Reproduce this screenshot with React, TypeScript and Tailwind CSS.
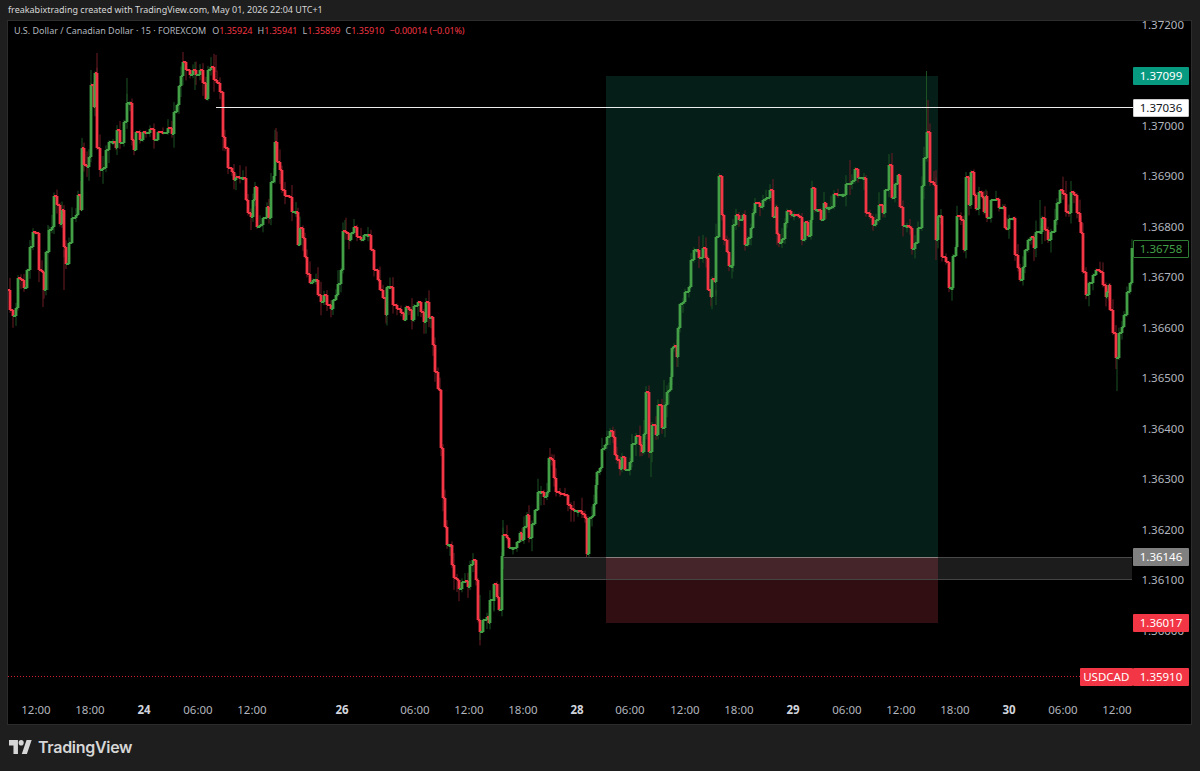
const P: number[] = [
8,290,10,310,13,316,16,308,18,278,21,280,24,288,27,270,30,247,33,232,36,233,39,270,42,272,44,290,46,252,49,230,52,227,54,196,57,205,60,224,62,210,64,247,66,264,69,243,72,218,76,215,78,195,81,210,82,148,84,165,87,167,89,157,91,85,94,107,95,73,97,148,100,170,103,168,106,150,109,142,113,142,116,148,117,130,120,143,124,122,127,103,130,103,132,140,134,150,136,132,140,140,143,132,146,133,150,129,154,140,158,132,163,133,168,128,172,134,174,112,177,105,179,86,181,76,183,62,186,70,190,75,193,70,196,75,200,70,203,83,206,99,208,70,211,67,214,80,217,83,220,92,223,137,225,148,228,168,232,172,234,180,236,177,240,178,243,178,246,200,248,213,251,217,253,200,255,187,257,227,260,225,263,218,267,207,269,218,271,182,274,176,275,142,277,162,280,170,282,190,285,196,290,197,292,212,296,212,298,245,300,228,303,238,305,257,307,274,310,283,313,280,316,280,318,295,321,302,324,295,327,305,331,309,333,300,336,295,338,284,341,270,343,231,346,233,349,240,351,233,354,227,357,237,361,240,364,235,368,235,371,250,374,270,378,280,380,290,383,298,386,315,387,287,390,287,393,305,397,309,401,313,404,320,406,307,409,310,412,320,414,306,418,302,421,312,424,322,426,302,429,318,431,317,433,345,435,372,438,389,440,390,441,448,443,498,445,527,447,545,450,545,452,565,454,578,457,580,459,589,462,582,465,581,468,587,470,565,473,560,476,580,478,620,480,632,483,620,487,617,489,623,490,600,494,599,494,584,497,597,499,610,502,556,503,535,507,538,509,548,513,548,517,542,520,533,522,540,524,527,527,515,529,538,532,524,535,510,538,492,541,492,544,497,547,492,549,458,552,460,554,478,556,492,560,494,565,495,568,505,571,509,574,511,578,511,582,514,585,518,587,554,589,518,592,516,594,504,596,485,597,472,600,468,602,449,605,445,607,437,610,431,613,437,615,455,617,460,620,469,622,457,625,470,630,462,632,444,636,436,640,445,642,452,644,434,646,392,649,452,652,425,656,435,658,405,662,428,665,405,667,392,669,390,671,377,672,348,674,346,677,357,678,328,680,304,683,302,685,292,689,287,691,260,694,250,697,250,699,258,703,248,706,258,708,290,711,297,712,279,715,282,716,237,719,176,722,215,724,240,727,252,729,266,732,266,733,225,736,215,739,220,743,215,745,245,748,238,751,228,753,213,755,203,760,207,763,200,766,198,770,190,773,217,776,207,777,234,779,243,782,239,785,223,787,211,791,215,794,215,799,217,802,240,805,222,808,236,811,220,812,188,815,210,818,210,821,220,824,203,826,208,829,208,831,207,834,194,838,195,843,195,846,184,852,181,855,169,858,178,864,178,866,213,870,217,873,225,876,220,879,205,883,213,885,190,889,165,892,198,895,184,898,175,900,207,903,226,907,226,910,228,912,249,915,243,918,228,922,186,924,158,927,132,930,182,934,185,936,240,938,216,941,216,942,257,946,262,949,288,952,288,953,256,956,247,957,216,961,220,964,250,966,177,969,205,971,172,974,195,976,209,979,192,982,197,984,212,986,196,987,218,991,200,996,199,999,208,1003,207,1005,228,1007,229,1009,219,1013,218,1015,255,1018,268,1020,280,1023,267,1025,250,1028,240,1031,237,1034,248,1036,232,1041,232,1042,218,1045,230,1048,240,1051,232,1055,220,1057,203,1060,190,1063,194,1066,212,1069,213,1071,192,1074,195,1077,213,1080,222,1081,233,1083,272,1086,295,1089,283,1093,275,1096,270,1100,272,1103,285,1106,297,1107,292,1109,285,1110,310,1113,333,1116,358,1119,333,1122,327,1124,315,1127,292,1130,283,1132,248,
];

const GREEN = "#43a047";
const RED = "#f23645";
const DIM_G = "#1c5222";
const DIM_R = "#6f1c25";

const EXTRA: [number, number, number, "g" | "r"][] = [
  [926.5, 71, 132, "g"], [928, 100, 135, "r"], [97, 53, 75, "r"], [91, 70, 90, "g"], [127, 78, 103, "g"],
  [183, 52, 62, "r"], [216, 55, 72, "r"], [586.5, 554, 565, "r"], [651, 452, 477, "g"], [1117, 358, 391, "g"],
  [64, 250, 290, "r"], [43, 290, 307, "r"], [276, 128, 150, "r"], [550, 448, 462, "r"], [345, 220, 232, "g"],
  [936, 170, 260, "r"], [503, 520, 556, "g"], [1040, 200, 232, "g"],
  [850, 160, 195, "r"], [644, 420, 436, "g"], [664, 380, 405, "g"], [716, 290, 305, "g"], [48, 225, 290, "g"],
  [195, 62, 90, "g"], [480, 595, 640, "g"],
];

function wickFor(i: number) {
  const a = Math.abs(Math.sin(i * 12.9898) * 43758.5453) % 1;
  const b = Math.abs(Math.sin(i * 78.233) * 12543.231) % 1;
  return [a * a * 13 + 1, b * b * 13 + 1];
}

function Candles() {
  const items: React.ReactNode[] = [];
  for (let n = 2; n < P.length; n += 2) {
    const i = n / 2;
    const py = P[n - 1];
    const x = P[n];
    const y = P[n + 1];
    const up = y <= py;
    const top = Math.min(py, y);
    const bot = Math.max(py, y);
    const [w1, w2] = wickFor(i);
    items.push(
      <rect key={"w" + i} x={x - 0.5} y={top - w1} width={1} height={bot - top + w1 + w2} fill={up ? DIM_G : DIM_R} />
    );
  }
  EXTRA.forEach(([x, a, b, c], i) => {
    items.push(<rect key={"e" + i} x={x - 0.5} y={Math.min(a, b)} width={1} height={Math.abs(b - a)} fill={c === "g" ? DIM_G : DIM_R} />);
  });
  for (let n = 2; n < P.length; n += 2) {
    const i = n / 2;
    const px = P[n - 2];
    const py = P[n - 1];
    const x = P[n];
    const y = P[n + 1];
    const up = y <= py;
    const c = up ? GREEN : RED;
    const top = Math.min(py, y);
    const h = Math.max(2, Math.abs(y - py));
    items.push(
      <g key={"b" + i} fill={c}>
        <rect x={px} y={py - 1} width={x - px} height={2} />
        <rect x={x - 1.4} y={top} width={2.8} height={h} />
      </g>
    );
  }
  return <g>{items}</g>;
}

const yOf = (p: number) => 125.5 + (1.37 - p) * 50500;
const TICKS = [1.372, 1.37, 1.369, 1.368, 1.367, 1.366, 1.365, 1.364, 1.363, 1.362, 1.361, 1.36];

const TIMES: [string, number, boolean][] = [
  ["12:00", 36, false], ["18:00", 90, false], ["24", 144, true], ["06:00", 198, false], ["12:00", 252, false],
  ["26", 342, true], ["06:00", 415, false], ["12:00", 469, false], ["18:00", 523, false], ["28", 577, true],
  ["06:00", 630, false], ["12:00", 685, false], ["18:00", 739, false], ["29", 793, true], ["06:00", 847, false],
  ["12:00", 901, false], ["18:00", 955, false], ["30", 1009, true], ["06:00", 1063, false], ["12:00", 1117, false],
];

const LABELS: { t: string; y: number; cls: string }[] = [
  { t: "1.37099", y: 76, cls: "bg-[#089981] text-white" },
  { t: "1.37036", y: 107.5, cls: "bg-white text-[#131722] border border-[#cccccc]" },
  { t: "1.36758", y: 249, cls: "bg-black text-[#43a047] border border-[#2f7d32]" },
  { t: "1.36146", y: 557, cls: "bg-[#808080] text-white" },
  { t: "1.36017", y: 622.5, cls: "bg-[#f23645] text-white" },
  { t: "1.35910", y: 676.5, cls: "bg-[#f23645] text-white" },
];

function Legend() {
  const V = ({ children }: { children: React.ReactNode }) => <span className="text-[#f23645]">{children}</span>;
  return (
    <div className="absolute left-[6px] top-[3px] flex gap-[5px] whitespace-nowrap text-[9px] leading-[14px] text-[#b2b5be]">
      <span className="mr-[1px]">U.S. Dollar / Canadian Dollar · 15 · FOREXCOM</span>
      <span>O<V>1.35924</V></span>
      <span>H<V>1.35941</V></span>
      <span>L<V>1.35899</V></span>
      <span>C<V>1.35910</V></span>
      <span className="tracking-[-0.1px]"><V>−0.00014 (−0.01%)</V></span>
    </div>
  );
}

export default function App() {
  return (
    <div className="flex h-[771px] w-[1200px] flex-col overflow-hidden bg-[#1e1e1e] font-['Noto_Sans',sans-serif]">
      <header className="flex h-[20px] items-center px-2 text-[9px] text-[#d6d6d6]">
        freakabixtrading created with TradingView.com, May 01, 2026 22:04 UTC+1
      </header>
      <main className="mx-[7px] h-[705px] w-[1185px] border border-[#2c2c2c] bg-black">
        <div className="relative h-full w-full overflow-hidden">
          <svg className="absolute inset-0 h-full w-full" viewBox="8 21 1183 703">
            <rect x={606} y={76} width={332} height={481} fill="#051f18" />
            <rect x={606} y={557} width={332} height={66} fill="#310e11" />
            <Candles />
            <rect x={504} y={557} width={628} height={23} fill="#1c1c1c" />
            <rect x={606} y={557} width={332} height={23} fill="#45242a" />
            <rect x={504} y={557} width={628} height={1} fill="#4a4a4a" />
            <rect x={504} y={579} width={628} height={1} fill="#444444" />
            <rect x={606} y={557} width={332} height={1} fill="#8a8080" />
            <rect x={216} y={107} width={917} height={1} fill="#ececec" />
            <line x1={8} y1={676.5} x2={1080} y2={676.5} stroke="#d11f2e" strokeWidth={1} strokeDasharray="1 2" />
          </svg>
          <Legend />
          {TICKS.map((p) => (
            <span
              key={p}
              className="absolute left-[1125px] w-[51px] text-right text-[11.5px] leading-[14px] text-[#b2b5be]"
              style={{ top: yOf(p) - 21 - 7 }}
            >
              {p.toFixed(5)}
            </span>
          ))}
          {TIMES.map(([t, x, b], i) => (
            <span
              key={i}
              className={"absolute top-[682px] w-[40px] -translate-x-1/2 text-center text-[11.5px] leading-[14px] " + (b ? "font-bold text-[#d1d4dc]" : "text-[#b2b5be]")}
              style={{ left: x - 8 }}
            >
              {t}
            </span>
          ))}
          {LABELS.map((l) => (
            <div
              key={l.t}
              className={"absolute left-[1125px] flex h-[18px] w-[56px] items-center justify-center rounded-[1px] text-[11.5px] " + l.cls}
              style={{ top: l.y - 21 - 9 }}
            >
              {l.t}
            </div>
          ))}
          <div className="absolute left-[1072px] top-[646.5px] flex h-[18px] w-[52.5px] items-center justify-center rounded-[1px] bg-[#f23645] text-[11.5px] text-white">
            USDCAD
          </div>
        </div>
      </main>
      <footer className="flex flex-1 items-center gap-[6px] pl-[9px] pb-[2px]">
        <svg width="23" height="14" viewBox="0 3 36 20" fill="#d6d6d6" preserveAspectRatio="none">
          <path d="M14 23H7V11H0V3h14v20zM28 23h-8l7.5-20h8L28 23z" />
          <circle cx="19" cy="7" r="4" />
        </svg>
        <span className="font-['Inter',sans-serif] text-[16px] font-semibold tracking-[-0.3px] text-[#d6d6d6]">TradingView</span>
      </footer>
    </div>
  );
}
